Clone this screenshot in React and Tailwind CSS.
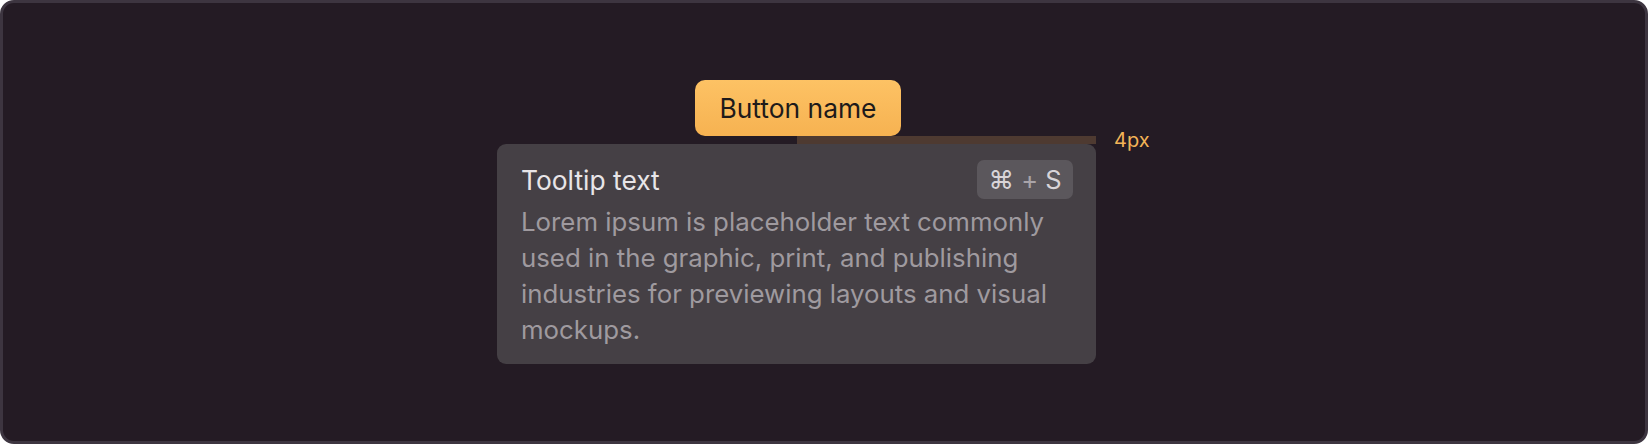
export default function App() {
  return (
    <div
      className="w-[1648px] h-[444px] rounded-[14px] border-[3px] border-[#3d3540] bg-[#241b24] overflow-hidden"
      style={{ fontFamily: 'Inter, "Noto Sans", sans-serif' }}
    >
      <div className="flex flex-col items-start pt-[77px] pl-[494px]">
        <button className="ml-[198px] w-[206px] h-[56px] rounded-[10px] bg-gradient-to-b from-[#fdc264] to-[#f6b251] flex items-center justify-center text-[26.4px] leading-none text-[#1e1a1a]">
          Button name
        </button>
        <div className="relative ml-[300px] w-[299px] h-[8px] bg-[#4e3a31]">
          <span className="absolute left-[317px] top-[-10px] text-[20px] leading-[28px] text-[#f3b457] whitespace-nowrap">
            4px
          </span>
        </div>
        <div className="w-[599px] rounded-[9px] bg-[#454045] pt-4 pb-4 pl-6 pr-[23px]">
          <div className="flex items-center justify-between h-[39px]">
            <span className="text-[26.4px] leading-[32px] text-[#e8e5e8]">Tooltip text</span>
            <span className="w-[96px] h-[39px] rounded-[7px] bg-[#5b575c] flex items-center justify-center text-[25.5px] leading-none text-[#d8d4d8]">
              ⌘ <span className="mx-[0.28em] text-[#a9a4a9]">+</span> S
            </span>
          </div>
          <p className="mt-[5px] text-[25.8px] leading-[36px] text-[#9f9a9f]">
            Lorem ipsum is placeholder text commonly used in the graphic, print, and publishing industries for previewing layouts and visual mockups.
          </p>
        </div>
      </div>
    </div>
  );
}
